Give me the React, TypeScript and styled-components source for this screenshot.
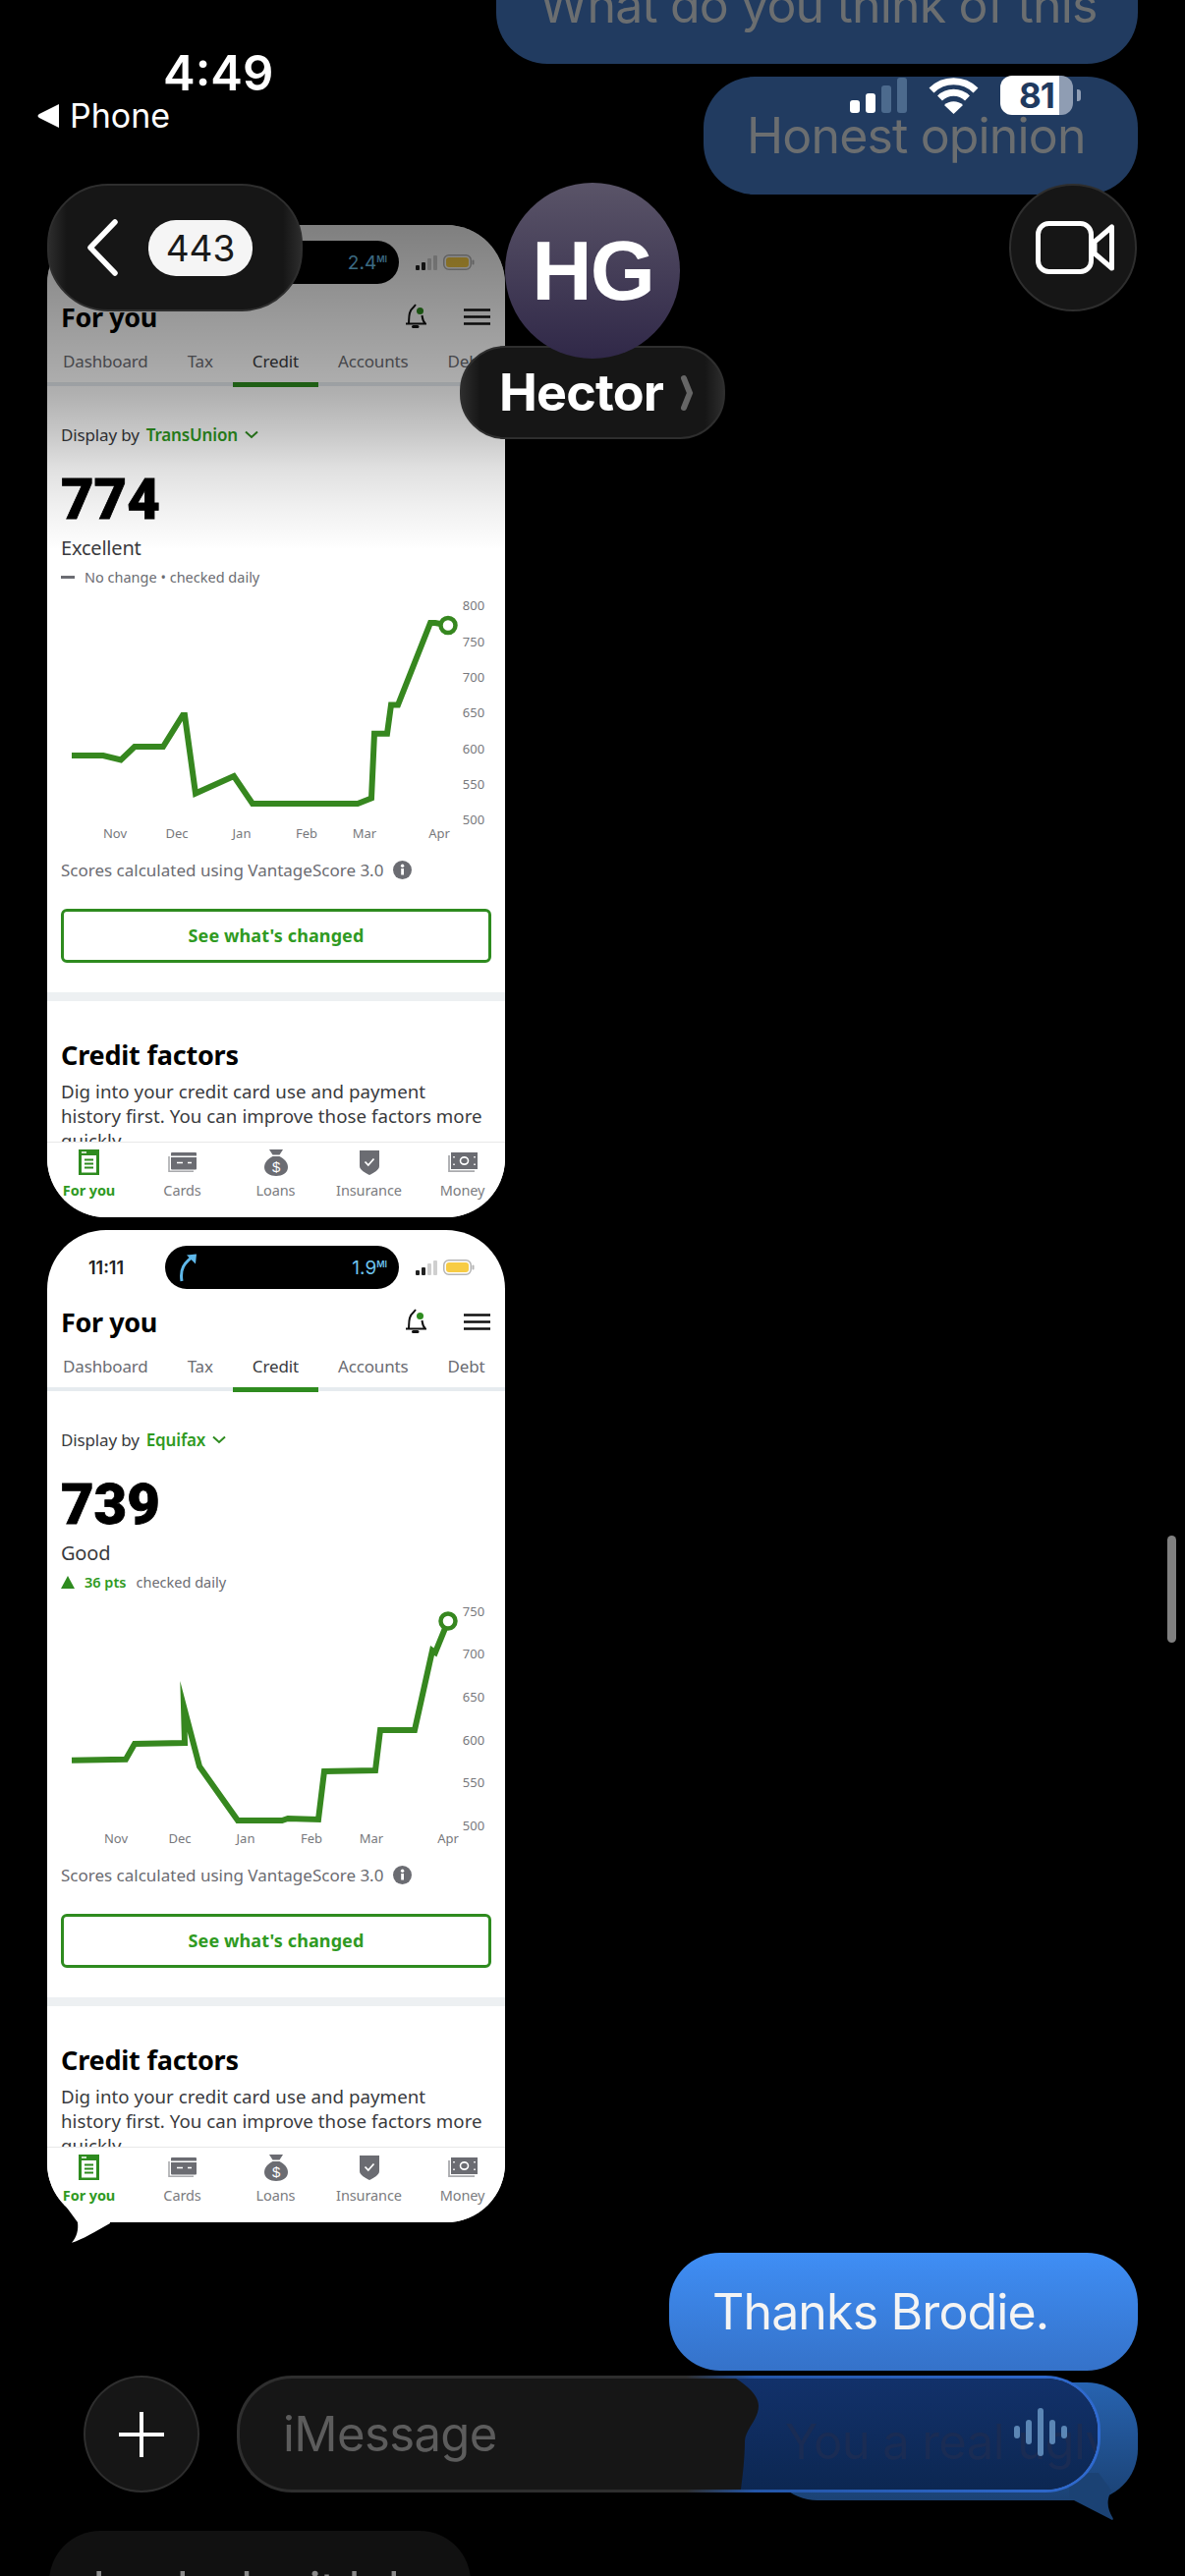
import React from "react";
import styled, { createGlobalStyle } from "styled-components";

const GREEN = "#2e8b1f";
const LINE_GREEN = "#36871f";
const TEXT_GREEN = "#2f9a22";
const GRAY = "#6b6c72";
const IOS_FONT = `Inter, "Liberation Sans", sans-serif`;
const APP_FONT = `"Noto Sans", "Open Sans", sans-serif`;

const GlobalStyle = createGlobalStyle`
  html, body {
    margin: 0;
    padding: 0;
    background: #000;
  }
`;

const Screen = styled.div`
  position: relative;
  width: 1206px;
  height: 2622px;
  overflow: hidden;
  background: #000;
  font-family: ${IOS_FONT};
`;

/* ---------- conversation ---------- */

const Conversation = styled.div`
  display: flex;
  flex-direction: column;
  align-items: flex-end;
  margin-top: -55px;
  padding: 0 48px;
`;

const bubbleTones = {
  dim: "background: #213b60; color: #6b6e70;",
  blue: "background: linear-gradient(#3f8ef5, #3572c9); color: #f4f4f4;",
  deep: "background: linear-gradient(#2763b0, #1b4274); color: transparent;",
  gray: "background: #111; color: #8a8a8a;",
};

const Bubble = styled.div<{ $tone: keyof typeof bubbleTones; $gap: number; $width: number }>`
  position: relative;
  box-sizing: border-box;
  width: ${(p) => p.$width}px;
  height: 120px;
  padding-left: 44px;
  margin-top: ${(p) => p.$gap}px;
  border-radius: 52px;
  font-size: 50px;
  line-height: 120px;
  letter-spacing: -0.85px;
  white-space: nowrap;
  ${(p) => bubbleTones[p.$tone]}
`;

const GrayBubble = styled(Bubble)`
  align-self: flex-start;
  margin-left: 2px;
`;

const BubbleTail = styled.svg`
  position: absolute;
  right: 0;
  bottom: -22px;
  width: 70px;
  height: 50px;
`;

const PhoneWrap = styled.div<{ $gap: number }>`
  position: relative;
  align-self: flex-start;
  margin-top: ${(p) => p.$gap}px;
`;

const PhoneTail = styled.svg`
  position: absolute;
  left: 0;
  top: 973px;
  width: 70px;
  height: 60px;
`;

const Phone = styled.div`
  position: relative;
  z-index: 1;
  display: flex;
  flex-direction: column;
  width: 466px;
  height: 1010px;
  overflow: hidden;
  border-radius: 60px;
  background: #fff;
  font-family: ${APP_FONT};
`;

const TopShade = styled.div`
  position: absolute;
  inset: 0 0 auto 0;
  height: 330px;
  z-index: 2;
  background: linear-gradient(
    rgba(0, 0, 0, 0.5),
    rgba(0, 0, 0, 0.31) 52%,
    rgba(0, 0, 0, 0.22) 64%,
    rgba(0, 0, 0, 0.12) 75%,
    rgba(0, 0, 0, 0.06) 87%,
    rgba(0, 0, 0, 0.01) 98%,
    rgba(0, 0, 0, 0)
  );
`;

const PhoneStatus = styled.div`
  display: flex;
  align-items: center;
  flex: none;
  height: 44px;
  padding-top: 16px;
`;

const PhoneClock = styled.div`
  width: 120px;
  text-align: center;
  font-family: ${IOS_FONT};
  font-size: 18px;
  font-weight: 600;
  color: #222;
`;

const Island = styled.div`
  display: flex;
  align-items: center;
  justify-content: space-between;
  box-sizing: border-box;
  width: 238px;
  height: 44px;
  padding: 0 12px 0 14px;
  border-radius: 22px;
  background: #000;
`;

const Distance = styled.div`
  font-family: ${IOS_FONT};
  font-size: 19px;
  color: #6ec4ee;

  sup {
    font-size: 9px;
    font-weight: 600;
    vertical-align: 7px;
    line-height: 0;
  }
`;

const PhoneIcons = styled.div`
  display: flex;
  align-items: center;
  gap: 6px;
  margin-left: 17px;
`;

const HeaderRow = styled.div`
  display: flex;
  align-items: center;
  flex: none;
  height: 66px;
  padding: 0 15px 0 14px;
`;

const Title = styled.div`
  flex: 1;
  font-size: 27px;
  font-weight: 700;
  letter-spacing: -0.4px;
  color: #000;
`;

const HeaderIcons = styled.div`
  display: flex;
  align-items: center;
  gap: 38px;
`;

const TabRow = styled.div`
  display: flex;
  flex: none;
  height: 34px;
  border-bottom: 4px solid #e6ebef;
  white-space: nowrap;
`;

const Tab = styled.div<{ $active?: boolean }>`
  flex: none;
  height: 34px;
  padding: 0 20px;
  line-height: 26px;
  font-size: 17px;
  letter-spacing: -0.15px;
  color: ${(p) => (p.$active ? "#393a3d" : GRAY)};
  border-bottom: ${(p) => (p.$active ? `5px solid ${GREEN}` : "none")};

  &:first-child {
    margin-left: -4px;
  }
`;

const Content = styled.div`
  flex: 1;
  min-height: 0;
  overflow: hidden;
  padding: 0 14px;
`;

const DisplayRow = styled.div`
  display: flex;
  align-items: center;
  gap: 7px;
  margin-top: 33px;
  height: 32px;
  font-size: 17px;
  letter-spacing: -0.15px;
  color: #393a3d;

  b {
    color: ${TEXT_GREEN};
    font-weight: 600;
  }
`;

const Score = styled.div`
  margin-top: 29px;
  height: 42px;
  font-family: Roboto, "Liberation Sans", sans-serif;
  font-size: 58px;
  font-weight: 900;
  line-height: 42px;
  color: #000;
  -webkit-text-stroke: 0.8px #000;
`;

const Grade = styled.div`
  margin-top: 15px;
  height: 28px;
  line-height: 28px;
  font-size: 20px;
  letter-spacing: -0.2px;
  color: #393a3d;
`;

const Delta = styled.div`
  display: flex;
  align-items: center;
  margin-top: 5px;
  height: 20px;
  font-size: 14.5px;
  color: ${GRAY};
`;

const DeltaMark = styled.svg`
  flex: none;
  margin-right: 10px;
`;

const DeltaPoints = styled.span`
  margin-right: 10px;
  font-weight: 600;
  color: ${TEXT_GREEN};
`;

const Chart = styled.svg`
  display: block;
  width: 466px;
  height: 254px;
  margin: 6px 0 0 -14px;
`;

const AxisLabel = styled.text`
  font-family: ${APP_FONT};
  font-size: 13px;
  fill: #77787c;
  text-anchor: middle;
  dominant-baseline: central;
`;

const ScoreNote = styled.div`
  display: flex;
  align-items: center;
  gap: 10px;
  margin-top: 16px;
  height: 24px;
  font-size: 17px;
  color: ${GRAY};
`;

const OutlineButton = styled.div`
  box-sizing: border-box;
  height: 55px;
  margin-top: 28px;
  border: 3px solid ${GREEN};
  border-radius: 6px;
  text-align: center;
  font-size: 18px;
  font-weight: 700;
  line-height: 49px;
  letter-spacing: 0.1px;
  color: ${TEXT_GREEN};
`;

const SectionBreak = styled.div`
  height: 9px;
  margin: 30px -14px 0;
  background: #edf0f2;
`;

const SectionTitle = styled.div`
  margin-top: 38px;
  height: 34px;
  line-height: 34px;
  font-size: 27px;
  font-weight: 700;
  letter-spacing: -0.2px;
  color: #000;
`;

const SectionBody = styled.p`
  margin: 7px 0 0;
  font-size: 18.7px;
  line-height: 25px;
  letter-spacing: 0.05px;
  white-space: nowrap;
  color: #393a3d;
`;

const BottomTabs = styled.div`
  display: grid;
  grid-template-columns: repeat(5, 95px);
  flex: none;
  box-sizing: border-box;
  height: 77px;
  margin-left: -5px;
  border-top: 1px solid #e8e8e8;
  background: #fff;
`;

const BottomTab = styled.div<{ $active?: boolean }>`
  display: flex;
  flex-direction: column;
  align-items: center;
  font-size: 14.5px;
  font-weight: ${(p) => (p.$active ? 700 : 400)};
  letter-spacing: -0.1px;
  color: ${(p) => (p.$active ? TEXT_GREEN : "#7b7c80")};
`;

const TabIconBox = styled.div`
  display: flex;
  align-items: center;
  justify-content: center;
  height: 28px;
  margin-top: 6px;
  margin-bottom: 4px;
`;

/* ---------- system chrome on top ---------- */

const StatusBar = styled.div`
  position: absolute;
  inset: 0 0 auto 0;
  height: 140px;
  color: #fff;
`;

const Clock = styled.div`
  position: absolute;
  left: 166px;
  top: 45px;
  font-size: 49px;
  font-weight: 600;
  line-height: 60px;
`;

const BackToPhone = styled.div`
  position: absolute;
  left: 38px;
  top: 96px;
  display: flex;
  align-items: center;
  gap: 11px;
  font-size: 34px;
  line-height: 44px;
`;

const StatusIcons = styled.div`
  position: absolute;
  left: 865px;
  top: 77px;
  display: flex;
  align-items: center;
  gap: 22px;
`;

const SignalBars = styled.div`
  display: flex;
  align-items: flex-end;
  gap: 6px;
  height: 36px;
`;

const SignalBar = styled.i<{ $height: number; $on?: boolean }>`
  display: block;
  width: 10px;
  height: ${(p) => p.$height}px;
  border-radius: 3px;
  background: ${(p) => (p.$on ? "#fff" : "#4c6a8d")};
`;

const Battery = styled.div`
  position: relative;
  width: 74px;
  height: 40px;
  border-radius: 12px;
  background: linear-gradient(90deg, #fff 81%, #8f9db3 81%);
  text-align: center;
  font-size: 35px;
  font-weight: 700;
  line-height: 40px;
  letter-spacing: -1px;
  color: #1f3a5f;

  &::after {
    content: "";
    position: absolute;
    right: -8px;
    top: 14px;
    width: 4px;
    height: 12px;
    border-radius: 0 3px 3px 0;
    background: #8f9db3;
  }
`;

const NavRow = styled.div`
  position: absolute;
  left: 48px;
  right: 49px;
  top: 187px;
  display: flex;
  justify-content: space-between;
  z-index: 3;
`;

const glass = `
  box-sizing: border-box;
  background: linear-gradient(90deg, #2c2c2c, #161616 7%, #161616 93%, #2c2c2c);
  border: 2px solid #2e2e2e;
`;

const BackPill = styled.div`
  ${glass}
  display: flex;
  align-items: center;
  gap: 31px;
  width: 260px;
  height: 130px;
  padding-left: 38px;
  border-radius: 62px;
`;

const CountBadge = styled.div`
  width: 106px;
  height: 57px;
  border-radius: 28px;
  background: #f5f5f5;
  text-align: center;
  font-size: 37px;
  line-height: 57px;
  color: #1a1a1a;
`;

const VideoButton = styled.div`
  ${glass}
  display: flex;
  align-items: center;
  justify-content: center;
  width: 130px;
  height: 130px;
  padding-left: 4px;
  border-radius: 50%;
  background: #161616;
`;

const Contact = styled.div`
  position: absolute;
  left: 468px;
  top: 186px;
  z-index: 3;
  display: flex;
  flex-direction: column;
  align-items: center;
  width: 270px;
`;

const Avatar = styled.div`
  position: relative;
  z-index: 1;
  width: 178px;
  height: 179px;
  margin-bottom: -13px;
  border-radius: 50%;
  background: linear-gradient(#5a5468, #302848);
  text-align: center;
  font-family: "Liberation Sans", sans-serif;
  font-size: 85px;
  font-weight: 700;
  line-height: 179px;
  letter-spacing: -2px;
  color: #fff;
`;

const NamePill = styled.div`
  ${glass}
  display: flex;
  align-items: center;
  gap: 17px;
  width: 270px;
  height: 95px;
  padding-left: 38px;
  border-radius: 46px;
  font-size: 52px;
  font-weight: 700;
  letter-spacing: -0.8px;
  color: #fff;
`;

const Composer = styled.div`
  position: absolute;
  left: 85px;
  bottom: 85px;
  z-index: 3;
  display: flex;
  gap: 38px;
`;

const PlusButton = styled.div`
  ${glass}
  display: flex;
  align-items: center;
  justify-content: center;
  width: 118px;
  height: 119px;
  border-radius: 50%;
  background: #161616;
`;

const InputPill = styled.div`
  position: relative;
  box-sizing: border-box;
  width: 879px;
  height: 119px;
  overflow: hidden;
  padding-left: 44px;
  border: 3px solid transparent;
  border-radius: 56px;
  background:
    linear-gradient(#161616, #161616) padding-box,
    linear-gradient(90deg, #2e2e2e 52%, #2456a8 60%, #2f6ad0 100%) border-box;
  font-size: 49px;
  line-height: 113px;
  letter-spacing: -0.6px;
  color: #5c5c5c;
`;

const LiquidPanel = styled.svg`
  position: absolute;
  left: 0;
  top: 0;
  width: 873px;
  height: 113px;
`;

const GhostText = styled.div<{ $mirror?: boolean }>`
  position: absolute;
  left: 555px;
  top: ${(p) => (p.$mirror ? 97 : 8)}px;
  font-size: 49px;
  line-height: 113px;
  letter-spacing: -0.6px;
  white-space: nowrap;
  color: #1a2c54;
  transform: ${(p) => (p.$mirror ? "scaleY(-1)" : "none")};
`;

const VoiceIcon = styled.svg`
  position: absolute;
  left: 788px;
  top: 30px;
`;

const ScrollThumb = styled.div`
  position: absolute;
  left: 1188px;
  top: 1563px;
  z-index: 3;
  width: 9px;
  height: 109px;
  border-radius: 5px;
  background: #808080;
`;

/* ---------- icons ---------- */

const ArrowIcon = () => (
  <svg width="20" height="30" viewBox="0 0 20 30" fill="none" stroke="#5fb8ea" strokeWidth="3">
    <path d="M3 29C1 17 5 10 16 3" />
    <path d="M8 2.5L18 1.5L17 11.5" fill="#5fb8ea" stroke="none" />
  </svg>
);

const MiniSignal = () => (
  <svg width="22" height="15" viewBox="0 0 22 15">
    <rect x="0" y="10" width="4" height="5" rx="1" fill="#222" />
    <rect x="6" y="7" width="4" height="8" rx="1" fill="#222" />
    <rect x="12" y="3" width="4" height="12" rx="1" fill="#cfcfcf" />
    <rect x="18" y="0" width="4" height="15" rx="1" fill="#cfcfcf" />
  </svg>
);

const MiniBattery = () => (
  <svg width="32" height="16" viewBox="0 0 32 16">
    <rect x="0.75" y="0.75" width="27.5" height="14.5" rx="5" fill="#fff" stroke="#b5b5b5" strokeWidth="1.5" />
    <rect x="3" y="3" width="23" height="10" rx="3" fill="#f7cc45" />
    <rect x="29.5" y="5.5" width="2" height="5" rx="1" fill="#b5b5b5" />
  </svg>
);

const BellIcon = () => (
  <svg width="22" height="26" viewBox="0 0 22 26" fill="none" stroke="#111" strokeWidth="2">
    <path d="M1 20.5H21C18 18 18 15 17.5 12M4 20C4.5 14 3.5 8 9 3.5L11 1" />
    <path d="M8.5 23.5H13" strokeWidth="3" strokeLinecap="round" />
    <circle cx="15.5" cy="7.5" r="3.5" fill="#2e8b1f" stroke="none" />
  </svg>
);

const MenuIcon = () => (
  <svg width="27" height="17" viewBox="0 0 27 17" stroke="#111" strokeWidth="2.4">
    <path d="M0 1.5H27M0 8.5H27M0 15.5H27" />
  </svg>
);

const ChevronDown = () => (
  <svg width="14" height="9" viewBox="0 0 14 9" fill="none" stroke={GREEN} strokeWidth="2">
    <path d="M1 1.5L7 7L13 1.5" />
  </svg>
);

const InfoIcon = () => (
  <svg width="19" height="19" viewBox="0 0 19 19">
    <circle cx="9.5" cy="9.5" r="9.5" fill="#6b6c72" />
    <rect x="8.2" y="8" width="2.8" height="6.5" fill="#fff" />
    <circle cx="9.6" cy="5.3" r="1.7" fill="#fff" />
  </svg>
);

const ForYouIcon = () => (
  <svg width="21" height="26" viewBox="0 0 21 26">
    <rect width="21" height="26" fill="#2e8b1f" />
    <rect x="3" y="6" width="15" height="17.5" fill="#fff" />
    <path d="M3 3H8" stroke="#fff" strokeWidth="1.6" />
    <path d="M6 10.5H15M6 14.5H15M6 18.5H15" stroke="#2e8b1f" strokeWidth="1.8" />
  </svg>
);

const CardsIcon = () => (
  <svg width="29" height="20" viewBox="0 0 29 20">
    <path d="M1 4V19.2H26" fill="none" stroke="#a9aaad" strokeWidth="1.6" />
    <rect x="3" y="0" width="26" height="17.5" rx="1" fill="#6b6c72" />
    <path d="M3 4.2H29" stroke="#fff" strokeWidth="1.5" />
    <path d="M9 10.5H15M20 10.5H24" stroke="#fff" strokeWidth="1.5" />
  </svg>
);

const LoansIcon = () => (
  <svg width="24" height="27" viewBox="0 0 24 27">
    <path d="M5 0H19L15.5 5.5H8.5Z" fill="#6b6c72" />
    <path d="M8.5 7H15.5C20 9.5 24 13 24 18C24 24 18 27 12 27C6 27 0 24 0 18C0 13 4 9.5 8.5 7Z" fill="#6b6c72" />
    <text x="12" y="23" textAnchor="middle" fontSize="15" fontFamily="Liberation Sans" fill="#fff">$</text>
  </svg>
);

const ShieldIcon = () => (
  <svg width="20" height="25" viewBox="0 0 20 25">
    <path d="M0 0H20V16C20 20 14 23 10 25C6 23 0 20 0 16Z" fill="#6b6c72" />
    <path d="M5.5 11.5L8.8 15L14.5 8.5" fill="none" stroke="#fff" strokeWidth="1.8" />
  </svg>
);

const MoneyIcon = () => (
  <svg width="30" height="20" viewBox="0 0 30 20">
    <path d="M1 3V19.2H27" fill="none" stroke="#a9aaad" strokeWidth="1.8" />
    <rect x="3" y="0" width="27" height="17" fill="#6b6c72" />
    <ellipse cx="16.5" cy="8.5" rx="4" ry="3.6" fill="none" stroke="#fff" strokeWidth="1.6" />
    <path d="M6 4V5.5M27 4V5.5M6 11.5V13M27 11.5V13" stroke="#fff" strokeWidth="1.6" />
  </svg>
);

/* ---------- data ---------- */

type ChartData = {
  line: number[][];
  dot: number[];
  yLabels: [string, number][];
  xLabels: [string, number][];
};

const transUnion: ChartData = {
  line: [[25,166],[57,166],[75,170.5],[89,157],[118,157],[138,125],[140,125],[151,204.6],[190,187],[209,215],[316,215],[330,209.5],[333,143.7],[346,143.7],[350,114.6],[357,114.6],[390,31],[395,31],[408,33.5]],
  dot: [408, 33.5],
  yLabels: [["800",13],["750",49.6],["700",86],["650",122],["600",159],["550",195],["500",231]],
  xLabels: [["Nov",69],["Dec",132],["Jan",198],["Feb",264],["Mar",323],["Apr",399]],
};

const equifax: ChartData = {
  line: [[25,165.7],[80,164.7],[89,149],[140,148],[139,111],[155,172],[194,227],[239,227],[245,225],[276,226],[282,177],[334,176],[339,135],[374,135],[392,54],[395,56],[408,24]],
  dot: [408, 24],
  yLabels: [["750",14],["700",57],["650",101],["600",145],["550",188],["500",232]],
  xLabels: [["Nov",70],["Dec",135],["Jan",202],["Feb",269],["Mar",330],["Apr",408]],
};

const tabs = ["Dashboard", "Tax", "Credit", "Accounts", "Debt"];

const bottomTabs = [
  { label: "For you", icon: <ForYouIcon /> },
  { label: "Cards", icon: <CardsIcon /> },
  { label: "Loans", icon: <LoansIcon /> },
  { label: "Insurance", icon: <ShieldIcon /> },
  { label: "Money", icon: <MoneyIcon /> },
];

const ScoreChart = ({ data }: { data: ChartData }) => (
  <Chart viewBox="0 0 466 254">
    <polyline
      points={data.line.map((p) => p.join(",")).join(" ")}
      fill="none"
      stroke={LINE_GREEN}
      strokeWidth="6"
      strokeLinejoin="miter"
      strokeMiterlimit="12"
    />
    <circle cx={data.dot[0]} cy={data.dot[1]} r="7.5" fill="#fff" stroke={LINE_GREEN} strokeWidth="4.5" />
    {data.yLabels.map(([t, y]) => (
      <AxisLabel key={t} x="434" y={y}>{t}</AxisLabel>
    ))}
    {data.xLabels.map(([t, x]) => (
      <AxisLabel key={t} x={x} y="245">{t}</AxisLabel>
    ))}
  </Chart>
);

type ScreenshotProps = {
  distance: string;
  bureau: string;
  score: string;
  grade: string;
  chart: ChartData;
  points?: string;
  shaded?: boolean;
};

const Screenshot = ({ distance, bureau, score, grade, chart, points, shaded }: ScreenshotProps) => (
  <Phone>
    {shaded && <TopShade />}
    <PhoneStatus>
      <PhoneClock>11:11</PhoneClock>
      <Island>
        <ArrowIcon />
        <Distance>{distance}<sup>MI</sup></Distance>
      </Island>
      <PhoneIcons>
        <MiniSignal />
        <MiniBattery />
      </PhoneIcons>
    </PhoneStatus>
    <HeaderRow>
      <Title>For you</Title>
      <HeaderIcons>
        <BellIcon />
        <MenuIcon />
      </HeaderIcons>
    </HeaderRow>
    <TabRow>
      {tabs.map((t) => (
        <Tab key={t} $active={t === "Credit"}>{t}</Tab>
      ))}
    </TabRow>
    <Content>
      <DisplayRow>
        Display by <b>{bureau}</b> <ChevronDown />
      </DisplayRow>
      <Score>{score}</Score>
      <Grade>{grade}</Grade>
      {points ? (
        <Delta>
          <DeltaMark width="14" height="13" viewBox="0 0 14 13">
            <path d="M7 0L14 13H0Z" fill={GREEN} />
          </DeltaMark>
          <DeltaPoints>{points}</DeltaPoints>
          checked daily
        </Delta>
      ) : (
        <Delta>
          <DeltaMark width="14" height="3" viewBox="0 0 14 3">
            <rect width="14" height="3" fill={GRAY} />
          </DeltaMark>
          No change • checked daily
        </Delta>
      )}
      <ScoreChart data={chart} />
      <ScoreNote>
        Scores calculated using VantageScore 3.0 <InfoIcon />
      </ScoreNote>
      <OutlineButton>See what's changed</OutlineButton>
      <SectionBreak />
      <SectionTitle>Credit factors</SectionTitle>
      <SectionBody>
        Dig into your credit card use and payment
        <br />
        history first. You can improve those factors more
        <br />
        quickly
      </SectionBody>
    </Content>
    <BottomTabs>
      {bottomTabs.map((t, i) => (
        <BottomTab key={t.label} $active={i === 0}>
          <TabIconBox>{t.icon}</TabIconBox>
          {t.label}
        </BottomTab>
      ))}
    </BottomTabs>
  </Phone>
);

export default function App() {
  return (
    <Screen>
      <GlobalStyle />
      <Conversation>
        <Bubble $tone="dim" $gap={0} $width={653}>What do you think of this</Bubble>
        <Bubble $tone="dim" $gap={13} $width={442}>Honest opinion</Bubble>
        <PhoneWrap $gap={31}>
          <Screenshot
            shaded
            distance="2.4"
            bureau="TransUnion"
            score="774"
            grade="Excellent"
            chart={transUnion}
          />
        </PhoneWrap>
        <PhoneWrap $gap={13}>
          <PhoneTail viewBox="0 0 70 60">
            <path d="M9 8L20 22L31 37C32 45 30 52 25 57.7C35 55 50 46 64 38V8Z" fill="#fff" />
          </PhoneTail>
          <Screenshot
            distance="1.9"
            bureau="Equifax"
            score="739"
            grade="Good"
            points="36 pts"
            chart={equifax}
          />
        </PhoneWrap>
        <Bubble $tone="blue" $gap={31} $width={477}>Thanks Brodie.</Bubble>
        <Bubble $tone="deep" $gap={12} $width={378}>
          <BubbleTail viewBox="0 0 70 50">
            <path d="M0 28H5L42 47C45 49 45.5 47 44 45C40 38 37 30 43 18L30 0H0Z" fill="#1b4274" />
          </BubbleTail>
        </Bubble>
        <GrayBubble $tone="gray" $gap={31} $width={429}>Looks legit lol</GrayBubble>
      </Conversation>

      <StatusBar>
        <Clock>4:49</Clock>
        <BackToPhone>
          <svg width="22" height="24" viewBox="0 0 22 24">
            <path d="M22 0V24L2 14C0 13 0 11 2 10Z" fill="#fff" />
          </svg>
          Phone
        </BackToPhone>
        <StatusIcons>
          <SignalBars>
            <SignalBar $height={13} $on />
            <SignalBar $height={20} $on />
            <SignalBar $height={28} />
            <SignalBar $height={36} />
          </SignalBars>
          <svg width="51" height="37" viewBox="0 0 51 37" fill="none" stroke="#fff" strokeWidth="7">
            <path d="M3 13A32 32 0 0 1 48 13" />
            <path d="M11.5 21A20 20 0 0 1 39.5 21" />
            <path d="M25.5 37L16 28A14 14 0 0 1 35 28Z" fill="#fff" stroke="none" />
          </svg>
          <Battery>81</Battery>
        </StatusIcons>
      </StatusBar>

      <NavRow>
        <BackPill>
          <svg width="32" height="58" viewBox="0 0 32 58" fill="none" stroke="#fff" strokeWidth="5.5" strokeLinecap="round" strokeLinejoin="round">
            <path d="M29 3L4 29L29 55" />
          </svg>
          <CountBadge>443</CountBadge>
        </BackPill>
        <VideoButton>
          <svg width="80" height="54" viewBox="0 0 80 54" fill="none" stroke="#fff" strokeWidth="5" strokeLinejoin="round">
            <rect x="2.5" y="2.5" width="54" height="49" rx="11" />
            <path d="M60 21L77.5 6V48L60 33Z" />
          </svg>
        </VideoButton>
      </NavRow>

      <Contact>
        <Avatar>HG</Avatar>
        <NamePill>
          Hector
          <svg width="14" height="38" viewBox="0 0 14 38" fill="none" stroke="#666" strokeWidth="6" strokeLinecap="round">
            <path d="M4 4L10 19L4 34" />
          </svg>
        </NamePill>
      </Contact>

      <ScrollThumb />

      <Composer>
        <PlusButton>
          <svg width="46" height="46" viewBox="0 0 46 46" stroke="#fff" strokeWidth="4">
            <path d="M23 0V46M0 23H46" />
          </svg>
        </PlusButton>
        <InputPill>
          iMessage
          <LiquidPanel viewBox="0 0 873 113">
            <defs>
              <linearGradient id="liquid" x1="0" y1="0" x2="0" y2="1">
                <stop offset="0" stopColor="#12316a" />
                <stop offset="1" stopColor="#0c2752" />
              </linearGradient>
            </defs>
            <path d="M505 0C518 8 528 18 528 28C528 42 514 52 514 64C514 80 512 98 510 113H873V0Z" fill="url(#liquid)" />
          </LiquidPanel>
          <GhostText>You a real ugly</GhostText>
          <GhostText $mirror>You a real ugly</GhostText>
          <VoiceIcon width="54" height="50" viewBox="0 0 54 50" fill="#5b86b5">
            <rect x="0" y="18" width="6" height="13" rx="3" />
            <rect x="12" y="12" width="6" height="25" rx="3" />
            <rect x="24" y="0" width="6" height="49" rx="3" />
            <rect x="36" y="12" width="6" height="25" rx="3" />
            <rect x="48" y="18" width="6" height="13" rx="3" />
          </VoiceIcon>
        </InputPill>
      </Composer>
    </Screen>
  );
}
